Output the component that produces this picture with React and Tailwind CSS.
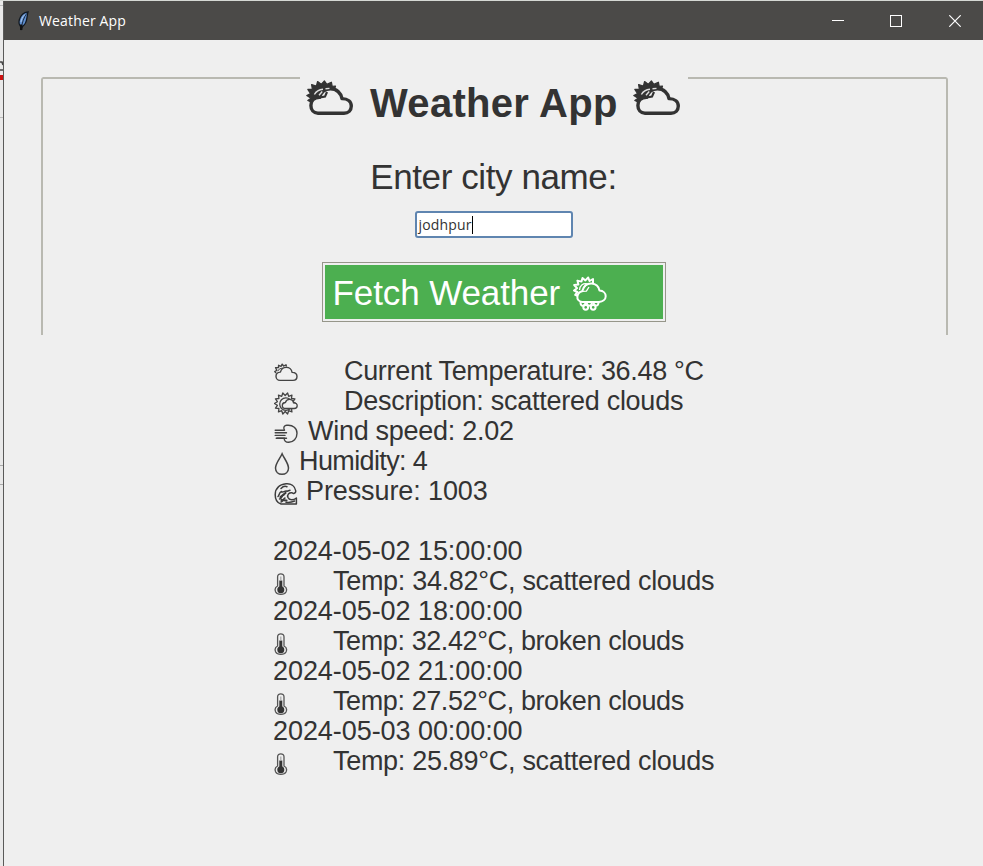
import React from "react";

const SANS = "font-['Liberation_Sans',Arial,sans-serif]";

function sunSpikes(cx, cy, r1, r2, n) {
  const pts = [];
  for (let i = 0; i < n * 2; i++) {
    const a = (Math.PI * i) / n;
    const r = i % 2 ? r1 : r2;
    pts.push(`${(cx + r * Math.cos(a)).toFixed(2)},${(cy + r * Math.sin(a)).toFixed(2)}`);
  }
  return pts.join(" ");
}

/* Bold cloud with a sun peeking out behind its upper left */
function TitleCloud({ className }) {
  return (
    <svg viewBox="0 0 48 36" className={className} fill="none">
      <path
        d="M1.8 20.5 L5 18.2 L.8 15.6 L4.6 13.6 L1.8 9.4 L6.4 9.3 L5.6 4.6 L10.4 6 L11.6 1.5 L15.2 4.3 L18.4 .9 L20.8 4.4 L25.4 2.2 L26.2 6.4 L29.5 6 L28.6 9 L22 10 L17.5 13.2 L15.5 17.3 L8.5 17.8 L5 22 Z"
        fill="#333"
        stroke="#333"
        strokeWidth="1.2"
        strokeLinejoin="round"
      />
      <path
        d="M12 33.2 C7.5 33.2 4.9 29.8 4.9 25.6 C4.9 21.2 8 17.6 13.5 17.4 C15.2 11.8 19 8.8 24.5 8.8 C30.6 8.8 35 13 36 18.6 C42 18.6 45.3 21.8 45.3 26 C45.3 30.3 42.2 33.2 38 33.2 Z"
        fill="#efefef"
        stroke="#333"
        strokeWidth="3.4"
        strokeLinejoin="round"
      />
      <path d="M8.4 14.5 Q11 9.6 17 9.2 M16.2 11.5 L13 15.2 M19.5 8.7 L23.5 8.4" stroke="#dedede" strokeWidth="1.4" />
      <path d="M14 17.3 L19 16.6 L21 12" stroke="#333" strokeWidth="2.2" />
    </svg>
  );
}

function ButtonCloud() {
  return (
    <svg viewBox="0 0 34 36" className="h-9 w-[34px]" fill="none" stroke="#fff" strokeWidth="2" strokeLinejoin="round">
      <path d="M4.8 20 L2.2 18.8 L4.4 16 L1 14.5 L4 12.2 L1.2 9 L5.4 8.5 L4.4 4.6 L8.5 5.6 L9.5 2 L12.4 4.4 L15.2 1.5 L16.5 5 L20 3 L20 7" />
      <path d="M6.5 14 C6.6 9.5 10 7.2 14 7.8 M13.5 8.6 L10.5 12 M9.2 15.4 L13.4 15.2 L16 11" strokeWidth="1.3" />
      <path d="M9 26 C5.5 25.5 4 23 4.4 20.5 C4.8 17.4 6.6 15.7 9.2 15.2 C10.6 10 14.2 7.4 18.4 7.5 C22.8 7.7 25.8 10.6 26.5 14.6 C30.4 14.8 32.7 17.3 32.7 20.2 C32.7 23.6 29.7 25.7 26 26 L9 26" />
      <path d="M7.6 26 C7 31 12.4 31 12.4 26.5 M13.8 26.5 C13.6 30.8 19 30.8 18.8 26.5 M20.6 26.5 C20.8 31 26 30.5 25.4 26" />
      <circle cx="12.7" cy="31.3" r="2.4" />
      <circle cx="20.2" cy="31.3" r="2.4" />
    </svg>
  );
}

function SmallCloud() {
  return (
    <svg viewBox="0 0 24 20" className="-ml-px mt-[7px] h-5 w-6" fill="none" stroke="#444" strokeWidth="1.4" strokeLinejoin="round">
      <path d="M2 10 L.8 8.6 L2.8 7.2 L1.6 4.7 L4.5 4.6 L4.6 2.3 L7 3.4 L8.2 1.2 L9.7 3 L12 1.8 L12.5 3.6" />
      <path d="M3.6 8.2 Q5 5.2 8.5 5 M7.8 9.2 L9.6 8.6" strokeWidth="1" />
      <path d="M6 17.4 C3.5 17.4 2 15.4 2 13.2 C2 10.8 4 9.2 6.4 9.1 C7.3 6.1 9.4 4.4 12.2 4.4 C15.4 4.4 17.6 6.5 18.1 9.4 C21.2 9.4 23 11.3 23 13.6 C23 15.9 21.3 17.4 19 17.4 Z" fill="#efefef" />
    </svg>
  );
}

function SunCloud() {
  return (
    <svg viewBox="0 0 24 24" className="-ml-px mt-[6px] h-6 w-6" fill="none" stroke="#444" strokeWidth="1.3" strokeLinejoin="round">
      <polygon points={sunSpikes(11.2, 11.5, 8, 10.8, 14)} />
      <path d="M16.2 7.4 A6.3 6.3 0 1 0 16.2 16.8" />
      <path d="M11.5 16.5 C9.4 16.5 8.3 15.2 8.3 13.4 C8.3 11.7 9.6 10.6 11.4 10.5 C12 8.4 13.4 7.3 15.3 7.3 C17.5 7.3 19.2 8.7 19.5 10.9 C21.8 10.9 23.2 12 23.2 13.8 C23.2 15.5 21.9 16.5 20.2 16.5 Z" fill="#efefef" />
    </svg>
  );
}

function Wind() {
  return (
    <svg viewBox="0 0 24 24" className="-ml-px mt-[6px] h-6 w-6" fill="none" stroke="#444" strokeWidth="1.4" strokeLinecap="round" strokeLinejoin="round">
      <path d="M1.2 8.2 H10.5 C8.6 5.4 10.6 3 13.2 3.3 C19 2.8 23 6.3 23 11.2 C23 16.6 19.3 20.1 14.8 20.2 C12 20.4 9.7 18.6 10.4 16.2 H2.2" />
      <path d="M1.2 10.8 H12.5 M1.2 13.4 H11 M3 16.2 H12.5" />
    </svg>
  );
}

function Droplet() {
  return (
    <svg viewBox="0 0 16 24" className="-ml-px mt-[6px] h-6 w-4" fill="none" stroke="#444" strokeWidth="1.5">
      <path d="M8.1 1.8 C6.2 6.2 1.5 11.4 1.5 16 C1.5 20 4.5 22.3 8 22.3 C11.5 22.3 14.5 20 14.5 16 C14.5 11.4 10 6.2 8.1 1.8 Z" />
    </svg>
  );
}

function Wave() {
  return (
    <svg viewBox="0 0 24 24" className="-ml-px mt-[6px] h-6 w-6" fill="none" stroke="#3c3c3c" strokeWidth="1.5" strokeLinecap="round" strokeLinejoin="round">
      <path d="M21.8 9 C21 3.8 16.8 1.3 12 1.8 C5 2.4 1.2 6.8 1.2 12.8 C1.2 17.5 3 21 7 22 H22.4 V16 C19.2 18.5 15.2 18.2 14 15.5 C12.8 12.6 15 10.4 18 10.7 C19 12.2 21.8 11.4 21.8 9 Z" />
      <path d="M7 6.5 C9 4.4 11.5 4.1 13 4.8 M4 14.5 C5.5 13.5 4.8 10.3 7.5 9.5 C8.7 11.3 10.8 8.2 13 9.2 L16 8.2 M5.5 17 C8 17 7.3 13.5 10 12.8 M7 20 C9.5 19.6 8.6 17 11 16 M12 20.3 C15 20.6 18.5 20 20.5 19" />
      <path d="M6.5 15 L11.5 11 M7.5 18 L12.5 18.5" strokeWidth="2.2" />
    </svg>
  );
}

function Thermometer() {
  return (
    <svg viewBox="0 0 14 24" className="-ml-px mt-[6px] h-6 w-[14px]" fill="none" stroke="#555" strokeWidth="1.3">
      <path d="M3.6 14 V4.8 C3.6 .8 10 .8 10 4.8 V14 C12.6 15.3 13 17.8 12 20 C10.4 23.2 3.3 23.2 1.7 20 C.7 17.8 1.1 15.3 3.6 14 Z" />
      <path d="M6.8 8.5 V17" stroke="#333" strokeWidth="3" />
      <circle cx="6.8" cy="17.7" r="3.5" fill="#333" stroke="none" />
      <path d="M6.8 4.5 V8.5" stroke="#aaa" />
    </svg>
  );
}

function Feather() {
  return (
    <svg viewBox="0 0 14 22" className="h-[22px] w-[14px]">
      <path d="M11 1.8 C7 2.3 3.6 5.4 2.4 9.5 C1.5 12.6 2.2 14.8 3.5 16.4 L4.2 19 L5.6 16.4 C8.8 14.2 9.6 11 10 7.5 Q10.4 4 11 1.8Z" fill="#5f8fd0" stroke="#111820" strokeWidth="1.3" />
      <path d="M9.5 3.5 C7 7.5 5.2 12 4.2 19" fill="none" stroke="#18283f" strokeWidth="1" />
      <path d="M8 4.5 C5.5 6.5 4.4 9.5 4 12" fill="none" stroke="#a9c8f0" strokeWidth="1" />
      <path d="M4.2 14.5 L4.2 20" stroke="#111" strokeWidth="2.4" />
    </svg>
  );
}

function Row({ icon, indent, tracking, children }) {
  return (
    <div className="flex h-[30px] items-start pl-[2px]">
      <div className={`${indent} shrink-0`}>{icon}</div>
      <div className={`whitespace-pre ${tracking}`}>{children}</div>
    </div>
  );
}

const SCATTERED = "tracking-[-0.3px]";
const BROKEN = "tracking-[-0.4px]";

const forecast = [
  { time: "2024-05-02 15:00:00", text: "Temp: 34.82°C, scattered clouds", tracking: SCATTERED },
  { time: "2024-05-02 18:00:00", text: "Temp: 32.42°C, broken clouds", tracking: BROKEN },
  { time: "2024-05-02 21:00:00", text: "Temp: 27.52°C, broken clouds", tracking: BROKEN },
  { time: "2024-05-03 00:00:00", text: "Temp: 25.89°C, scattered clouds", tracking: SCATTERED },
];

export default function App() {
  return (
    <div className={`flex h-[866px] w-[983px] flex-col overflow-hidden bg-[#efefef] text-[#333] ${SANS}`}>
      <div className="h-px w-full shrink-0 bg-[#d5d8d4]" />
      <div className="flex min-h-0 flex-1">
        {/* sliver of the window behind */}
        <div className="flex w-[3px] shrink-0 flex-col bg-[#e9e9e9]">
          <div className="mt-[4px] h-px bg-[#bbb]" />
          <svg viewBox="0 0 3 12" className="mt-[54px] h-3 w-[3px]" fill="none" stroke="#444" strokeWidth="1.6">
            <path d="M0 2 H2 L3 5 M0 10 H3" />
          </svg>
          <div className="mt-[3px] h-[5px] bg-[#cc1010]" />
          <div className="mt-[37px] h-px bg-[#bbb]" />
          <div className="mt-[347px] h-px bg-[#aaa]" />
          <div className="mt-[18px] h-px bg-[#aaa]" />
        </div>
        <div className="flex min-w-0 flex-1 flex-col border-l border-[#5a5a59]">
          <header className="flex h-[39px] shrink-0 items-center bg-[#4b4a48] text-white">
            <div className="ml-[13px] flex w-[22px]">
              <Feather />
            </div>
            <div className="font-['Open_Sans','Noto_Sans',sans-serif] text-[14px] leading-5 tracking-[0.15px]">Weather App</div>
            <div className="ml-auto flex items-center">
              <svg viewBox="0 0 12 12" className="mr-[46px] size-3" stroke="#fff" shapeRendering="crispEdges">
                <path d="M0 5.5 H12" />
              </svg>
              <svg viewBox="0 0 12 12" className="mr-[47px] size-3" fill="none" stroke="#fff" shapeRendering="crispEdges">
                <rect x=".5" y=".5" width="11" height="11" />
              </svg>
              <svg viewBox="0 0 12 12" className="mr-[22px] size-3" stroke="#fff" strokeWidth="1.2">
                <path d="M.3 .3 L11.7 11.7 M11.7 .3 L.3 11.7" />
              </svg>
            </div>
          </header>

          <section className="mr-[35px] ml-[37px] mt-[37px] h-[258px] shrink-0 rounded-t-[3px] border-x-2 border-[#b9b9b1]">
            <div className="flex h-[50px] items-start">
              <div className="h-[2px] w-[257px] shrink-0 bg-[#b9b9b1]" />
              <h1 className="flex h-[50px] w-[388px] shrink-0 items-start pl-[6px] text-[40px] font-bold leading-[50px]">
                <TitleCloud className="mt-[3px] h-9 w-12 shrink-0" />
                <span className="ml-[16px] mt-px w-[248px] whitespace-nowrap tracking-[0.3px]">Weather App</span>
                <TitleCloud className="ml-[15px] mt-[3px] h-9 w-12 shrink-0" />
              </h1>
              <div className="h-[2px] flex-1 bg-[#b9b9b1]" />
            </div>
            <div className="mt-[30px] h-[40px] pr-[2px] text-center text-[35px] leading-[40px] tracking-[-0.4px]">Enter city name:</div>
            <div className="flex flex-col items-center pr-[2px]">
              <div className="mt-[14px] flex h-[27px] w-[158px] items-center rounded-[3px] border-2 border-[#5f85b0] bg-white pl-[2px] font-['Open_Sans','Noto_Sans',sans-serif] text-[14px]">
                <span className="tracking-[0.15px]">jodhpur</span>
                <span className="h-[18px] w-px bg-black" />
              </div>
              <button className="mt-[24px] flex h-[60px] w-[344px] items-start border border-[#96968a] bg-[#efefef] p-[2px] text-[35px] leading-[56px] text-white">
                <span className="flex h-full w-full items-center bg-[#4caf50] pl-[8px]">
                  <span className="mt-[2px] w-[240px] whitespace-nowrap text-left tracking-[-0.1px]">Fetch Weather</span>
                  <span className="mt-[3px]"><ButtonCloud /></span>
                </span>
              </button>
            </div>
          </section>

          <section className="ml-[269px] mt-[21px] text-[27px] leading-[30px]">
            <Row indent="w-[69px]" tracking="tracking-[-0.32px]" icon={<SmallCloud />}>Current Temperature: 36.48 °C</Row>
            <Row indent="w-[69px]" tracking="tracking-[-0.26px]" icon={<SunCloud />}>Description: scattered clouds</Row>
            <Row indent="w-[33px]" tracking="tracking-[-0.28px]" icon={<Wind />}>Wind speed: 2.02</Row>
            <Row indent="w-[24px]" tracking="tracking-[-0.62px]" icon={<Droplet />}>Humidity: 4</Row>
            <Row indent="w-[31px]" tracking="tracking-[-0.1px]" icon={<Wave />}>Pressure: 1003</Row>
            <div className="mt-[30px]">
              {forecast.map((f) => (
                <div key={f.time}>
                  <div className="h-[30px] tracking-[-0.06px]">{f.time}</div>
                  <Row indent="w-[58px]" tracking={f.tracking} icon={<Thermometer />}>{f.text}</Row>
                </div>
              ))}
            </div>
          </section>
        </div>
      </div>
    </div>
  );
}
